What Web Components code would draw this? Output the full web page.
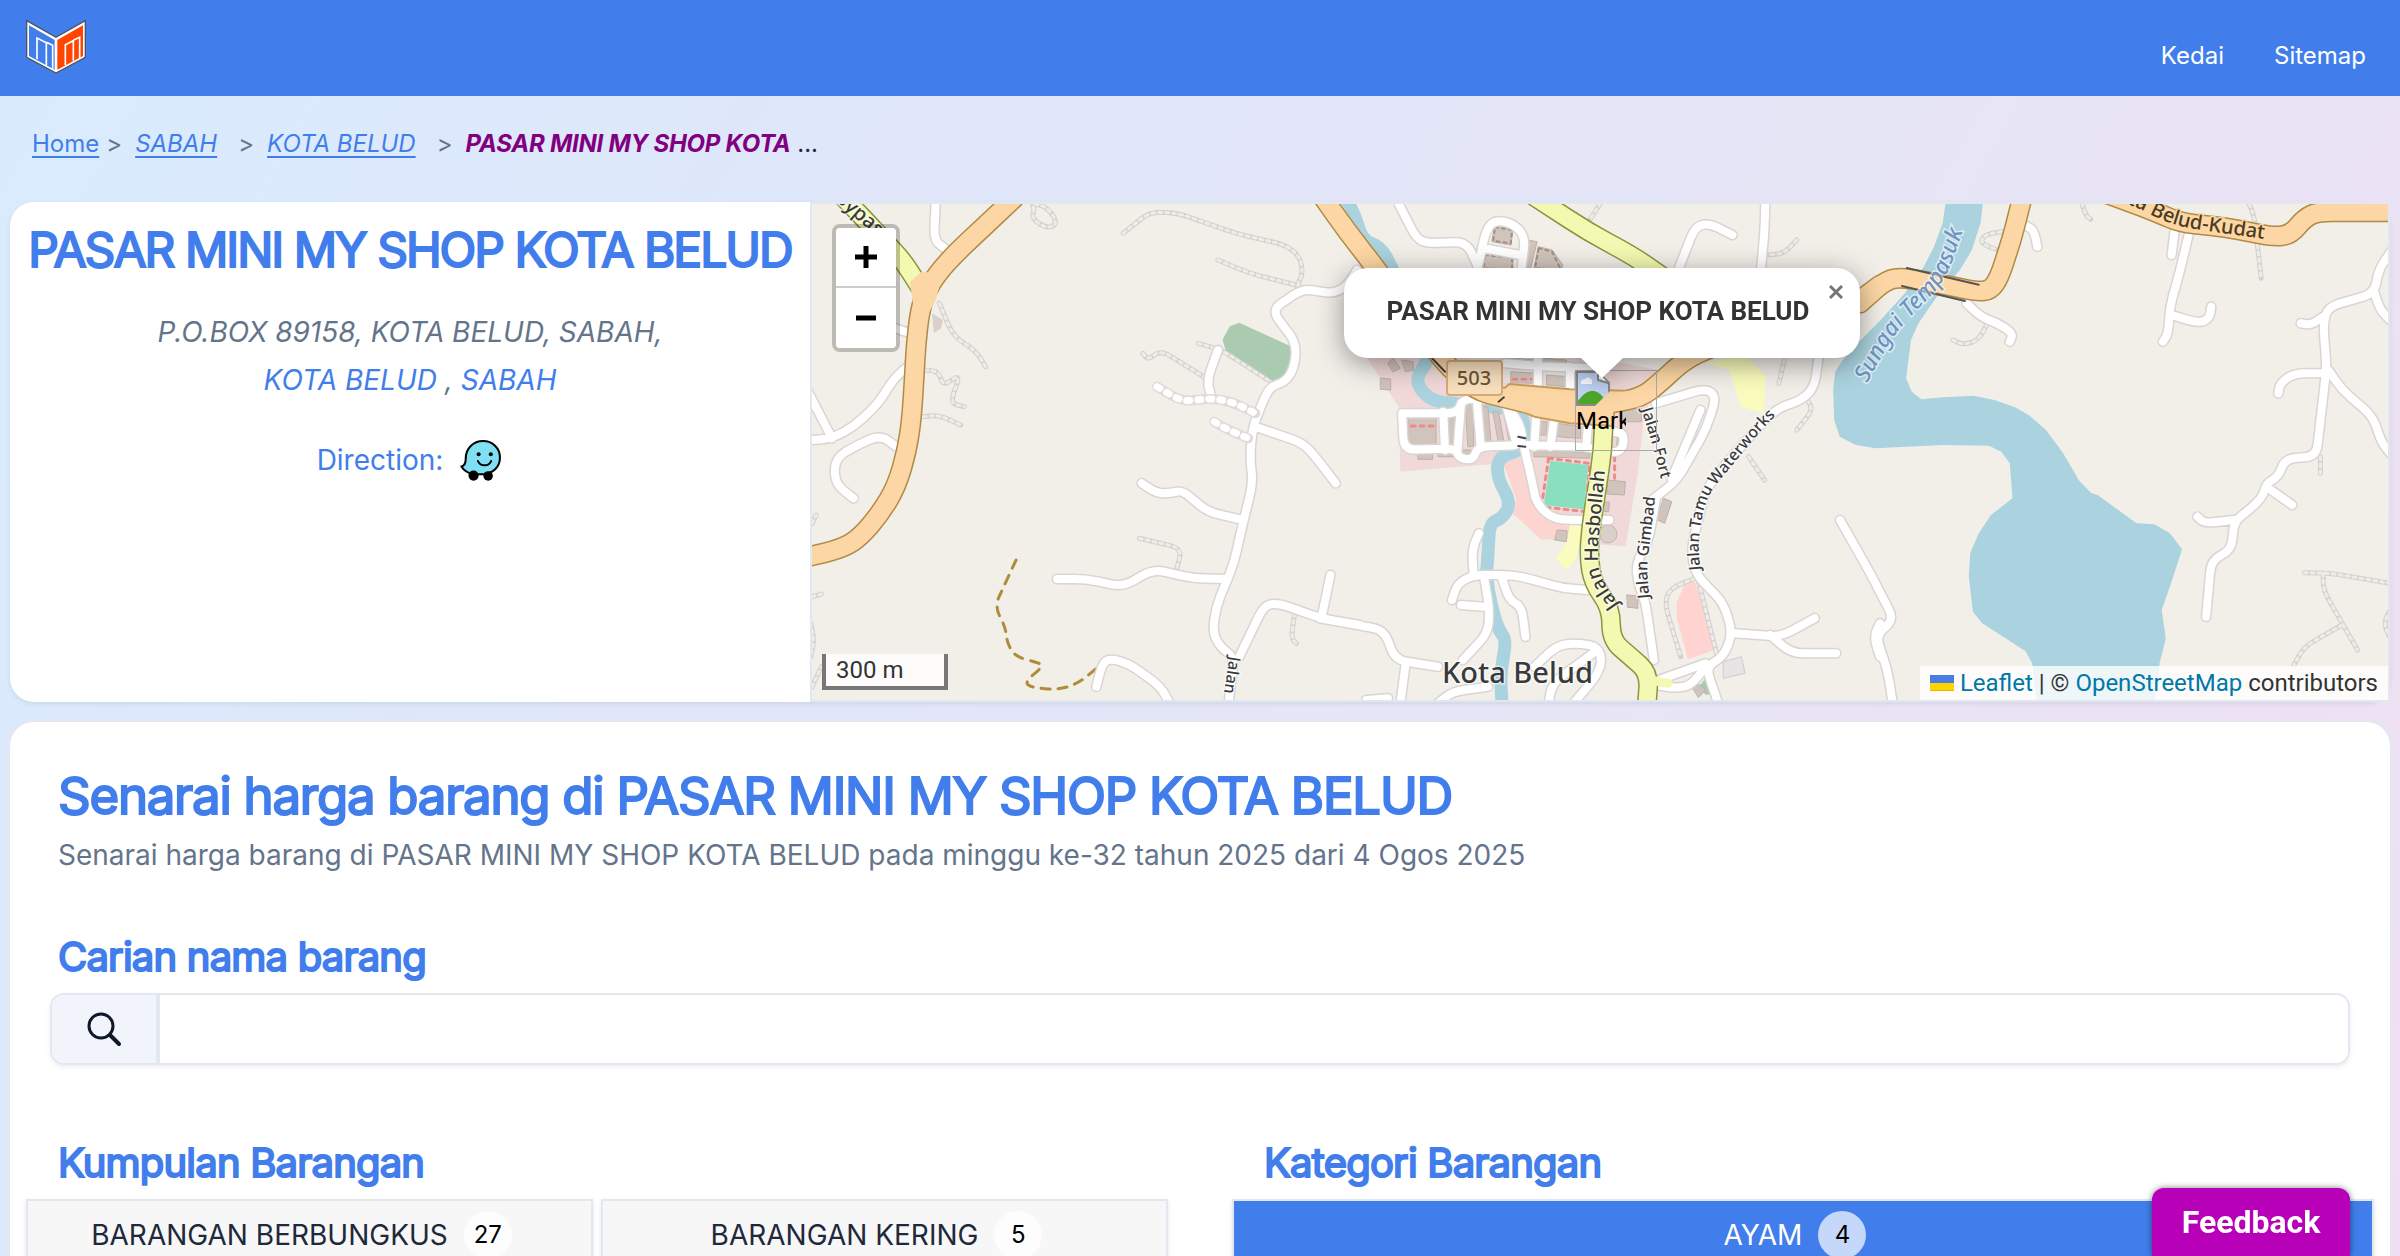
<!DOCTYPE html>
<html lang="ms">
<head>
<meta charset="utf-8">
<meta name="viewport" content="width=device-width, initial-scale=1">
<title>PASAR MINI MY SHOP KOTA BELUD</title>
<style>
  html { scrollbar-width: none; }
  body {
    margin: 0;
    min-height: 100vh;
    font-family: Inter, "Liberation Sans", sans-serif;
    color: #1e293b;
    background: linear-gradient(120deg, #d8ecfe 0%, #dfe7fa 28%, #e7e5f6 65%, #f0dff2 100%);
    --brand: #417eec;
    --muted: #64748b;
    --line: #e2e8f0;
  }
  main { display: flex; flex-direction: column; gap: 20px; padding: 0 10px 20px; }
</style>
</head>
<body>
<site-header></site-header>
<bread-crumbs></bread-crumbs>
<main>
  <shop-card>
    <shop-info slot="info"></shop-info>
    <shop-map slot="map" name="PASAR MINI MY SHOP KOTA BELUD"></shop-map>
  </shop-card>
  <price-list>
    <search-field label="Carian nama barang"></search-field>
    <choice-group slot="groups" heading="Kumpulan Barangan">
      <choice-button count="27">BARANGAN BERBUNGKUS</choice-button>
      <choice-button count="5">BARANGAN KERING</choice-button>
    </choice-group>
    <choice-group slot="groups" heading="Kategori Barangan">
      <choice-button count="4" active>AYAM</choice-button>
    </choice-group>
  </price-list>
</main>
<feedback-button>Feedback</feedback-button>

<script>
class Part extends HTMLElement {
  connectedCallback() {
    if (this.shadowRoot) return;
    this.attachShadow({ mode: "open" }).innerHTML = this.render();
  }
}

customElements.define("site-header", class extends Part {
  render() { return `
    <style>
      :host { display: block; background: var(--brand); }
      header { display: flex; align-items: center; justify-content: space-between; height: 96px; padding: 0 34px 0 24px; }
      .logo { display: block; }
      svg { display: block; width: 64px; height: 56px; }
      nav { display: flex; gap: 50px; padding-top: 16px; }
      nav a { color: #fff; font-size: 24px; line-height: 32px; text-decoration: none; }
    </style>
    <header>
      <a class="logo" href="#" aria-label="Home">
        <svg viewBox="42 30 192 168">
          <path d="M50 32 138 82 226 32V142L138 189 50 142Z" fill="#fff" stroke="#4b5563" stroke-width="4"/>
          <path d="M57 46 134 90V179L57 138Z" fill="#417eec"/>
          <path d="M219 46 142 90V179L219 138Z" fill="#ff4500"/>
          <path d="M81 148V84L109 98V166M109 97 128 106V176" fill="none" stroke="#fff" stroke-width="5"/>
          <path d="M166 165V104L190 92V152M190 91 209 82V144" fill="none" stroke="#fff" stroke-width="5"/>
        </svg>
      </a>
      <nav><a href="#kedai">Kedai</a><a href="#sitemap">Sitemap</a></nav>
    </header>`; }
});

customElements.define("bread-crumbs", class extends Part {
  render() { return `
    <style>
      :host { display: block; padding: 28px 32px 26px; }
      ol { display: flex; align-items: flex-start; height: 52px; margin: 0; padding: 0; list-style: none; font-size: 24px; line-height: 40px; }
      a { color: var(--brand); text-underline-offset: 4px; }
      .region { font-style: italic; }
      li + li::before { content: ">"; color: var(--muted); margin: 0 13px 0 7px; }
      li.far + li::before { margin-left: 21px; }
      .here { color: #800080; font-weight: 700; font-style: italic; letter-spacing: -0.01em; }
    </style>
    <nav aria-label="Breadcrumb"><ol>
      <li><a href="#">Home</a></li>
      <li class="far"><a class="region" href="#sabah">SABAH</a></li>
      <li class="far"><a class="region" href="#kota-belud">KOTA BELUD</a></li>
      <li><span class="here">PASAR MINI MY SHOP KOTA</span> ...</li>
    </ol></nav>`; }
});

customElements.define("shop-card", class extends Part {
  render() { return `
    <style>
      :host { display: grid; grid-template-columns: minmax(0, 800fr) minmax(0, 1580fr); min-height: 500px; box-sizing: border-box;
        border-radius: 24px; background: #fff; box-shadow: 0 2px 4px rgba(100,116,139,.15); }
    </style>
    <slot name="info"></slot><slot name="map"></slot>`; }
});

customElements.define("shop-info", class extends Part {
  render() { return `
    <style>
      :host { display: flex; flex-direction: column; align-items: center; gap: 28px; padding-top: 18px; text-align: center; }
      h1 { margin: 0; color: var(--brand); font-size: 48px; line-height: 60px; font-weight: 400; -webkit-text-stroke: 2px var(--brand); letter-spacing: -2px; white-space: nowrap; }
      address { color: var(--muted); font-size: 28px; line-height: 48px; }
      a { color: var(--brand); text-decoration: none; }
      .go { display: flex; align-items: center; gap: 16px; font-size: 28px; line-height: 56px; color: var(--brand); }
      svg { display: block; width: 44px; height: 44px; }
    </style>
    <h1>PASAR MINI MY SHOP KOTA BELUD</h1>
    <address>P.O.BOX 89158, KOTA BELUD, SABAH,<br><a href="#kota-belud">KOTA BELUD</a> , <a href="#sabah">SABAH</a></address>
    <a class="go" href="#waze">Direction:
      <svg viewBox="62 54 130 130" aria-hidden="true">
        <path d="M133 63C161 63 183 84 183 112 183 139 163 158 135 161H104C87 157 76 149 69 138 79 137 82 130 82 114 82 85 104 63 133 63Z" fill="#7fe0f3" stroke="#000" stroke-width="6" stroke-linejoin="round"/>
        <circle cx="105" cy="165" r="15"/><circle cx="148" cy="166" r="14"/>
        <circle cx="120" cy="102" r="6"/><circle cx="156" cy="102" r="6"/>
        <path d="M118 122C124 139 151 139 157 122" fill="none" stroke="#000" stroke-width="6" stroke-linecap="round"/>
      </svg>
    </a>`; }
});

/* Each sheet holds its own survey grid: origin and scale on the map plane. */
const sheets = {
  west: { x: 800, y: 190, sx: 2.8, sy: 3 },
  town: { x: 1320, y: 190, sx: 2.8, sy: 3 },
  east: { x: 1860, y: 190, sx: 2.904, sy: 3 }
};
function points(sheet, text) {
  const s = sheets[sheet];
  return text.trim().split(/\s+/).map(p => {
    const [x, y] = p.split(",").map(Number);
    return [s.x + x / s.sx, s.y + y / s.sy];
  });
}
const fmt = p => p[0].toFixed(1) + " " + p[1].toFixed(1);
function polygon(sheet, text) { return "M" + points(sheet, text).map(fmt).join("L") + "Z"; }
/* A line with its corners rounded off. */
function line(sheet, text, round = 12) {
  const p = points(sheet, text);
  let d = "M" + fmt(p[0]);
  for (let i = 1; i < p.length - 1; i++) {
    const [a, b, c] = [p[i - 1], p[i], p[i + 1]];
    const la = Math.hypot(b[0] - a[0], b[1] - a[1]) || 1, lc = Math.hypot(c[0] - b[0], c[1] - b[1]) || 1;
    const ra = Math.min(round, la / 2) / la, rc = Math.min(round, lc / 2) / lc;
    d += "L" + fmt([b[0] + (a[0] - b[0]) * ra, b[1] + (a[1] - b[1]) * ra]);
    d += "Q" + fmt(b) + " " + fmt([b[0] + (c[0] - b[0]) * rc, b[1] + (c[1] - b[1]) * rc]);
  }
  return d + "L" + fmt(p[p.length - 1]);
}
const many = (sheet, text, round) => text.trim().split("\n").map(t => line(sheet, t, round)).join("");
const shapes = (sheet, text) => text.trim().split("\n").map(t => polygon(sheet, t)).join("");

const streets = many("west", `
380,30 375,150 405,175
34,750 90,745 150,710 220,640 260,570 295,535
20,600 90,745
270,770 225,735 160,765 98,805 97,880 150,925
265,415 305,428
1560,240 1530,290 1490,312 1410,295 1320,360 1390,460 1385,530 1360,575 1315,590 1290,650 1268,710 1260,800 1268,880 1240,1000 1215,1120 1165,1250 1155,1330 1180,1375 1215,1400 1200,1540
1170,480 1140,570 1150,615
1275,710 1410,760 1450,810 1500,880
957,880 1000,910 1040,910 1070,900 1140,965 1240,990
720,1167 800,1167 905,1190 990,1137 1100,1165 1190,1167
1230,1400 1300,1245 1340,1240 1460,1285 1568,1305
1460,1285 1485,1155
830,1490 845,1425 865,1405 920,1420 1010,1490 1035,1540`) + many("town", `
215,30 270,145 300,160 410,155 440,225
440,240 465,120 490,90 540,100 575,140 565,230
460,175 560,195
1005,235 1050,110 1090,100 1155,135
1247,30 1245,120 1235,235
1400,470 1385,590 1350,630 1280,655 1220,720 1130,830 1080,900 1060,980 1040,1080 1050,1150 1130,1240 1155,1330 1130,1400 1080,1430 1115,1540
230,670 385,670 400,625 510,630 560,700 570,765 440,770 430,810 390,805 380,775 235,780 230,670
345,665 350,780
395,640 385,780
440,640 450,770
520,640 550,760
570,765 595,880 605,940 650,985 700,990 810,990
575,765 740,770 830,790 850,770 850,730 820,725
605,680 600,770
655,690 645,770
750,710 745,770
610,500 610,590
700,530 700,595
520,520 640,530 760,535
940,640 1080,595 1110,620 1080,720 1000,870 930,930
1065,660 985,865
940,930 920,1050 885,1120 890,1180 910,1230 920,1300 935,1410
1160,1330 1290,1340 1385,1285
1260,1335 1320,1390 1445,1390
370,1230 385,1180 430,1155 540,1155 600,1170 680,1195 750,1200
430,1150 425,1080 445,1030
460,1165 475,1260 470,1330 400,1410
395,1245 460,1250
510,1165 530,1230 565,1250 575,1340
0,1285 180,1320 210,1410 330,1430
240,1420 225,1540
600,1430 660,1370 700,1360 770,1365 790,1400 780,1450 710,1540
640,1540 650,1480 770,1385
330,1540 370,1505 470,1490
130,1530 190,1525
935,1475 1080,1420
940,1485 1000,1495 1040,1485 1080,1430
1568,1300 1550,1340 1568,1400`) + many("east", `
478,105 505,120 515,170
310,340 350,380 400,400 445,430 435,455
960,110 930,240 900,350 895,430 880,455
905,375 985,400 1015,385 1020,350
915,110 905,195
1545,180 1505,240 1495,310 1360,350 1345,400 1355,530 1345,620 1325,800 1235,805 1215,860 1180,880 1170,920 1130,960 1085,995 1080,1080 1020,1110 1005,1280
1495,310 1510,360 1545,395
1280,400 1310,405 1345,380
1215,610 1220,580 1260,550 1350,550
1360,540 1400,600 1490,680 1515,760 1545,795
1180,890 1255,945
980,980 1000,1000 1085,990
-58,990 30,1150 100,1290 45,1335 80,1440 95,1540`);

const tracks = many("west", `
905,130 980,65 1060,70 1220,130 1360,165 1400,200 1408,250 1395,280
1170,210 1260,250 1400,288
655,60 650,40 690,50 718,90 710,112 680,110 650,85 655,60
390,340 430,440 490,480 520,530
350,540 390,545 400,590 450,550 420,640 460,650
345,680 390,675 450,705
1115,460 1180,480 1310,570
960,490 975,510 1010,480 1130,560
950,1045 1070,1075 1055,1135
1385,1270 1375,1345 1390,1360
34,1000 45,975
34,1220 60,1212
30,1300 40,1350 30,1400
34,1490 60,1430`) + many("town", `
1050,1165 980,1195 965,1240 1010,1400
1060,1175 1110,1390
785,40 755,90
1335,150 1300,190 1255,195
1300,510 1285,580
1365,630 1380,660 1335,720
1200,800 1245,870`) + many("east", `
645,40 655,75 670,88
410,125 360,135 350,160 400,180
1130,42 1145,80 1165,265
1290,1148 1370,1150 1540,1180
1345,1150 1345,1200 1445,1380
1400,1305 1290,1370 1260,1425
1540,1260 1520,1300 1540,1345
370,400 345,450 300,465 270,450
1337,800 1337,850`);

const trunk = many("west", `
600,24 530,95 440,185 385,250 350,310 335,370 325,460 320,560 313,680 300,780 270,890 225,970 170,1040 120,1075 20,1101`, 30) + many("town", `
10,24 80,130 150,225 340,510 430,600 520,625 620,650 720,650 820,640 900,622 950,580 1020,510 1100,470 1500,340 1568,285`, 30) + many("east", `
0,340 70,275 110,262 200,275 340,305 380,300 405,260 440,150 472,20
700,5 850,62 930,98 1060,112 1200,140 1250,135 1290,85 1330,65 1550,65`, 14);
const secondary = many("west", `
120,20 200,110 290,215 335,290`) + many("town", `
600,20 750,125 880,200 960,260
795,660 792,780 775,900 760,1000 752,1100 765,1180 815,1255 815,1350 870,1400 922,1450 915,1545`, 24);
const creek = many("town", `
70,20 100,80 118,150 170,170 200,230 310,500 270,560 280,600 320,635 380,640 560,660 575,720 565,780 500,800 495,860 535,940 510,985 475,1000 470,1100 465,1160 480,1250 500,1320 522,1350 505,1450 510,1545`, 14);
const lake = polygon("east", `250,30 240,100 215,170 185,230 130,310 60,390 -12,465 -50,510 -72,545 -78,600 -75,690 -59,740 -12,765 45,775 240,765 375,767 410,785 435,820 443,925 380,975 345,1030 320,1090 316,1160 328,1265 355,1300 480,1383 500,1420 515,1545 855,1545 870,1420 888,1345 876,1260 905,1175 935,1078 900,1030 855,1003 803,1000 690,915 670,908 635,870 590,790 540,720 490,675 450,652 390,630 330,617 240,622 178,628 150,605 134,565 148,450 170,400 230,310 290,240 325,180 350,100 358,30`);
const homes = shapes("town", `
490,108 540,118 535,165 482,155
462,190 540,200 540,240 455,235
582,150 608,155 590,235 570,235
612,170 650,180 680,225 675,240 600,235
248,680 325,680 325,770 248,770
362,685 378,685 378,765 362,765
408,640 430,640 430,770 415,770
450,650 470,650 480,765 460,765
485,665 500,665 515,755 500,755
515,670 530,670 545,750 530,750
612,695 635,695 635,735 612,735
665,700 730,710 730,745 665,740
275,790 315,790 315,808 275,808
332,785 375,785 375,800 332,800
395,780 430,780 430,795 395,795
600,775 755,790 755,805 600,800
805,870 855,875 852,915 805,912
785,935 810,937 808,965 785,962
665,1020 692,1022 690,1055 658,1050
860,1215 890,1218 890,1255 862,1252
962,925 985,935 965,1000 945,990
835,735 852,735 850,765 832,765
840,655 900,655 900,695 840,695
170,565 198,567 198,600 170,598
190,520 205,505 225,535 205,545
230,510 260,515 262,540 240,545
535,545 610,550 610,580 535,578
635,555 695,560 695,590 635,585
540,505 600,510 600,525 540,522
625,505 690,510 690,528 625,525
1045,1495 1060,1482 1080,1500 1060,1522`);

customElements.define("shop-map", class extends Part {
  render() {
    const name = this.getAttribute("name");
    return `
    <style>
      :host { display: block; position: relative; margin: 2px; background: #f2efe9; box-shadow: 0 0 0 2px var(--line);
        font-family: Roboto, "Liberation Sans", sans-serif; font-size: 24px; color: #333; }
      .plane { position: absolute; inset: 0; width: 100%; height: 100%; }
      .plane path { fill: none; stroke-linecap: round; stroke-linejoin: round; }
      .plane text { font-family: "Noto Sans", sans-serif; font-weight: 500; fill: #3a3a3a; paint-order: stroke; stroke: rgba(255,255,255,.6); stroke-width: 3; }
      .zoom { position: absolute; left: 20px; top: 20px; display: flex; flex-direction: column; border: 4px solid rgba(0,0,0,.22); border-radius: 8px; background-clip: padding-box; }
      .zoom button { width: 60px; height: 60px; padding: 0; border: 0; background: #fff; color: #000; display: grid; place-items: center; }
      .zoom button:first-child { border-radius: 4px 4px 0 0; border-bottom: 2px solid #ccc; }
      .zoom button:last-child { border-radius: 0 0 4px 4px; }
      .zoom svg { width: 24px; height: 24px; }
      .scale { position: absolute; left: 10px; bottom: 10px; box-sizing: border-box; width: 126px; padding: 0 10px; border: 4px solid #777; border-top: 0; background: rgba(255,255,255,.8); line-height: 32px; }
      .credit { position: absolute; right: 0; bottom: 0; display: flex; align-items: center; gap: 6px; padding: 0 10px; background: rgba(255,255,255,.8); line-height: 34px; white-space: nowrap; }
      .credit a { color: #0078a8; text-decoration: none; }
      .credit svg { width: 24px; height: 16px; }
      .pin { position: absolute; left: 763px; top: 166px; width: 80px; height: 79px; border: 1px solid #aaa; color: #000; line-height: 28px; }
      .pin svg { display: block; width: 34px; height: 36px; }
      .pin span { display: block; width: 50px; overflow: hidden; }
      .popup { position: absolute; left: 532px; top: 64px; filter: drop-shadow(0 6px 14px rgba(0,0,0,.4)); }
      .bubble { display: flex; align-items: center; justify-content: center; width: 516px; height: 90px; padding: 0 8px 4px 0; box-sizing: border-box; border-radius: 24px; background: #fff; }
      .bubble b { font-size: 26px; line-height: 34px; font-weight: 700; }
      .tip { display: block; margin: 0 auto; width: 42px; height: 20px; background: #fff; clip-path: polygon(0 0, 100% 0, 50% 100%); }
      .popup button { position: absolute; right: 8px; top: 8px; width: 32px; height: 32px; padding: 0; border: 0; background: none; display: grid; place-items: center; }
      .popup button svg { width: 14px; height: 14px; }
    </style>
    <svg class="plane" viewBox="812 204 1576 496" preserveAspectRatio="xMidYMid slice" role="img" aria-label="Peta Kota Belud">
      <defs>
        <path id="gimbad" d="${line("town", "922,1225 915,1130 938,930 945,860")}"/>
        <path id="fort" d="${line("town", "900,658 930,760 955,870 990,1000")}"/>
        <path id="tamu" d="${line("town", "1065,1140 1058,1050 1082,920 1135,850 1240,715 1300,650", 20)}"/>
        <path id="hasb" d="${line("town", "838,1245 790,1170 775,1110 790,930 803,780", 24)}"/>
        <path id="tempasuk" d="${line("east", "20,580 100,430 250,270 325,40", 24)}"/>
        <path id="kudat" d="${line("east", "705,24 790,45 880,92 940,112 1070,132 1320,168", 14)}"/>
        <path id="bypass" d="${line("west", "94,28 210,135 300,240")}"/>
        <path id="jalan" d="${line("west", "1203,1398 1180,1560")}"/>
      </defs>
      <path d="${shapes("town", "130,500 220,650 225,845 450,825 520,820 560,960 650,1050 855,1070 890,850 905,700 950,540 720,495")}" style="fill:#f0d9d8"/>
      <path d="${shapes("town", "515,825 600,790 610,930 640,985 700,1000 690,1040 620,1050 560,990 525,960 550,930")}" style="fill:#fcd5d1"/>
      <path d="${shapes("town", "1048,1170 1112,1378 1030,1408 1000,1290 998,1240 1020,1185")}" style="fill:#ffd4d0"/>
      <path d="${shapes("town", "1080,520 1180,490 1250,560 1240,670 1180,650 1145,540\n700,1005 740,1000 715,1110 690,1140 660,1105 690,1060")}" style="fill:#fafcbd"/>
      <path d="${shapes("town", "400,495 720,505 760,600 520,580")}" style="fill:#ebe4e2"/>
      <path d="${creek}" stroke="#aad3df" stroke-width="13"/>
      <path d="${lake}" style="fill:#aad3df"/>
      <path d="${polygon("west", "1230,402 1380,475 1375,540 1355,565 1325,570 1200,500 1186,450 1205,412")}" style="fill:#aacbaf" stroke="#aacbaf" stroke-width="2"/>
      <path d="${polygon("town", "1080,1465 1105,1510 1080,1515 1060,1490")}" style="fill:#aacbaf"/>
      <path d="${polygon("town", "1130,1415 1180,1400 1190,1450 1130,1465")}" style="fill:#e6e4e4" stroke="#ccc"/>
      <path d="${polygon("west", "370,370 400,390 395,415 375,430")}" style="fill:#d9d0c9"/>
      <path d="${homes}" style="fill:#d1c4bd" stroke="#bfb0a8"/>
      <circle cx="1608" cy="534" r="9" fill="#d9d0c9" stroke="#c3b5ae"/>
      <path d="${shapes("town", "490,112 538,120 534,160 485,152\n462,195 538,203 538,240 458,235\n612,175 650,185 675,240 602,235")}" stroke="#a58f84" stroke-width="2" stroke-dasharray="3 4"/>
      <path d="${polygon("town", "640,805 755,820 745,965 620,950")}" stroke="#f08a8a" stroke-width="3" stroke-dasharray="4 5"/>
      <path d="${polygon("town", "645,812 750,825 740,958 627,945")}" style="fill:#88e0be"/>
      <path d="${many("town", "825,800 825,865\n255,708 325,708\n540,568 605,568")}" stroke="#f08a8a" stroke-width="3" stroke-dasharray="4 5"/>
      <path d="${tracks}" stroke="#d3d1d0" stroke-width="5"/>
      <path d="${tracks}" stroke="#efece8" stroke-width="3" stroke-dasharray="3 4"/>
      <path d="${line("west", "605,1110 570,1190 545,1250 575,1310 580,1360 605,1402 670,1418 680,1430 630,1475 645,1492 720,1500 780,1480 830,1435")}" stroke="#b08b3c" stroke-width="3" stroke-dasharray="9 8"/>
      <path d="${streets}" stroke="#d8d5d4" stroke-width="11"/>
      <path d="${streets}" stroke="#fff" stroke-width="8"/>
      <path d="${many("west", "1000,590 1070,635 1150,625 1210,635 1275,670\n1160,695 1190,715 1255,745")}" stroke="#dedbd9" stroke-width="10"/>
      <path d="${many("west", "1000,590 1070,635 1150,625 1210,635 1275,670\n1160,695 1190,715 1255,745")}" stroke="#fff" stroke-width="7" stroke-dasharray="3 8"/>
      <path d="${secondary}" stroke="#8b9440" stroke-width="20"/>
      <path d="${secondary}" stroke="#f3f9b0" stroke-width="17"/>
      <path d="${line("town", "925,1470 975,1480")}" stroke="#f3f9b0" stroke-width="9"/>
      <path d="${trunk}" stroke="#b18b45" stroke-width="21"/>
      <path d="${polygon("west", "308,275 340,245 400,250 380,330 345,400 318,400 316,340")}" style="fill:#fcd6a4"/>
      <path d="${polygon("town", "505,605 530,582 700,598 860,602 860,642 825,655 820,708 700,700 600,680 545,655")}" style="fill:#fcd6a4" stroke="#c99d5b" stroke-width="2"/>
      <path d="${trunk}" stroke="#fcd6a4" stroke-width="18"/>
      <path d="${many("east", "136,234 345,284\n122,288 305,333")}" stroke="#555" stroke-width="2"/>
      <path d="${many("town", "310,500 350,545\n500,635 515,622\n555,740 575,745\n555,768 575,770")}" stroke="#444" stroke-width="2"/>
      <rect x="1447" y="361" width="55" height="34" rx="3" fill="#f8dfbd" stroke="#d5ac76" stroke-width="2"/>
      <text x="1474" y="385" text-anchor="middle" font-size="20" style="stroke:none;fill:#6b5435">503</text>
      <text x="1442" y="683" font-size="29">Kota Belud</text>
      <text font-size="16"><textPath href="#gimbad">Jalan Gimbad</textPath></text>
      <text font-size="16"><textPath href="#fort">Jalan Fort</textPath></text>
      <text font-size="16"><textPath href="#tamu">Jalan Tamu Waterworks</textPath></text>
      <text font-size="19"><textPath href="#hasb">Jalan Hasbollah</textPath></text>
      <text font-size="16"><textPath href="#jalan">Jalan</textPath></text>
      <text font-size="20"><textPath href="#bypass">Bypass</textPath></text>
      <text font-size="20" style="stroke:#fcd6a4;fill:#4a3a20"><textPath href="#kudat">Kota Belud-Kudat</textPath></text>
      <text font-size="23" style="fill:#6f94c4;font-style:italic"><textPath href="#tempasuk">Sungai Tempasuk</textPath></text>
    </svg>
    <div class="zoom">
      <button aria-label="Zoom in"><svg viewBox="0 0 24 24"><path d="M12 1V23M1 12H23" stroke="#000" stroke-width="5"/></svg></button>
      <button aria-label="Zoom out"><svg viewBox="0 0 24 24"><path d="M2 12H22" stroke="#000" stroke-width="5"/></svg></button>
    </div>
    <div class="scale">300 m</div>
    <div class="pin">
      <svg viewBox="0 0 34 36" aria-hidden="true">
        <path d="M1 1H22L33 12V34H1Z" fill="#c3d6f8" stroke="#8b8b8b" stroke-width="2"/>
        <path d="M5 13a4 4 0 0 1 4-5 4 4 0 0 1 7 3v2Z" fill="#fff"/>
        <path d="M2 33V30C8 22 12 20 17 20S28 25 30 33Z" fill="#4ea82b"/>
        <path d="M19 35 34 20V35Z" fill="#fcd6a4"/>
        <path d="M22 1V9L32 12" fill="#fff" stroke="#8b8b8b" stroke-width="2"/>
      </svg>
      <span>Mark</span>
    </div>
    <div class="popup">
      <div class="bubble"><b>${name}</b></div>
      <i class="tip"></i>
      <button aria-label="Close popup"><svg viewBox="0 0 14 14"><path d="M1 1 13 13M13 1 1 13" stroke="#757575" stroke-width="3"/></svg></button>
    </div>
    <div class="credit">
      <svg viewBox="0 0 24 16" aria-hidden="true"><path fill="#4c7be1" d="M0 0h24v8H0z"/><path fill="#ffd500" d="M0 8h24v7H0z"/><path fill="#e0bc00" d="M0 15h24v1H0z"/></svg>
      <span><a href="#leaflet">Leaflet</a> | © <a href="#osm">OpenStreetMap</a> contributors</span>
    </div>`;
  }
});

customElements.define("price-list", class extends Part {
  render() { return `
    <style>
      :host { display: block; padding: 44px 16px 40px; border-radius: 24px; background: #fff; box-shadow: 0 0 0 2px var(--line); }
      header { padding: 0 32px; }
      h2 { margin: 0; color: var(--brand); font-size: 51px; line-height: 60px; font-weight: 400; -webkit-text-stroke: 2px var(--brand); letter-spacing: -0.025em; }
      p { margin: 6px 0 0; color: var(--muted); font-size: 28px; line-height: 46px; }
      .columns { display: grid; grid-template-columns: repeat(2, minmax(0, 1fr)); gap: 64px; margin-top: 74px; }
    </style>
    <header>
      <h2>Senarai harga barang di PASAR MINI MY SHOP KOTA BELUD</h2>
      <p>Senarai harga barang di PASAR MINI MY SHOP KOTA BELUD pada minggu ke-32 tahun 2025 dari 4 Ogos 2025</p>
    </header>
    <slot></slot>
    <div class="columns"><slot name="groups"></slot></div>`; }
});

customElements.define("search-field", class extends Part {
  render() { return `
    <style>
      :host { display: block; margin-top: 55px; padding: 0 24px; }
      label { display: block; padding: 0 8px; color: var(--brand); font-size: 40px; line-height: 48px; font-weight: 400; -webkit-text-stroke: 2px var(--brand); letter-spacing: -0.02em; }
      .field { display: flex; height: 72px; box-sizing: border-box; margin-top: 12px; border: 2px solid var(--line); border-radius: 14px; overflow: hidden; box-shadow: 0 2px 4px rgba(100,116,139,.12); }
      button { display: grid; place-items: center; width: 108px; padding: 0; border: 0; border-right: 4px solid var(--line); background: #f1f5fb; }
      svg { width: 36px; height: 36px; }
      input { flex: 1; min-width: 0; border: 0; padding: 0 20px; font: 28px Inter, sans-serif; background: #fff; outline: 0; }
    </style>
    <label for="q">${this.getAttribute("label")}</label>
    <div class="field">
      <button aria-label="Cari"><svg viewBox="0 0 36 36"><circle cx="15" cy="15" r="12" fill="none" stroke="#0f172a" stroke-width="3"/><path d="M24 24 33 33" stroke="#0f172a" stroke-width="4" stroke-linecap="round"/></svg></button>
      <input id="q" type="text">
    </div>`; }
});

customElements.define("choice-group", class extends Part {
  render() { return `
    <style>
      :host { display: block; }
      h3 { margin: 0 32px 12px; color: var(--brand); font-size: 40px; line-height: 48px; font-weight: 400; -webkit-text-stroke: 2px var(--brand); letter-spacing: -0.02em; }
      div { display: grid; grid-template-columns: repeat(auto-fit, minmax(480px, 1fr)); gap: 8px; }
    </style>
    <h3>${this.getAttribute("heading")}</h3>
    <div><slot></slot></div>`; }
});

customElements.define("choice-button", class extends Part {
  render() { return `
    <style>
      :host { display: block; }
      button { display: flex; align-items: center; justify-content: center; width: 100%; height: 72px; padding: 0; border: 2px solid var(--line);
        background: #f7f7f7; color: #1e293b; font: 28px/48px Inter, "Liberation Sans", sans-serif; box-shadow: 0 2px 4px rgba(100,116,139,.2); }
      span { width: 48px; height: 48px; margin: 0 16px; border-radius: 24px; background: #fdfdfd; color: #000; font-size: 24px; text-align: center; }
      :host([active]) button { background: var(--brand); color: #fff; }
      :host([active]) span { background: #c6d8f9; }
    </style>
    <button><slot></slot><span>${this.getAttribute("count")}</span></button>`; }
});

customElements.define("feedback-button", class extends Part {
  render() { return `
    <style>
      :host { position: fixed; right: 50px; bottom: 0; }
      button { display: block; width: 198px; height: 68px; padding: 0; border: 0; border-radius: 12px 12px 0 0; background: #b800b8; color: #fff;
        font: 700 32px/66px Roboto, "Liberation Sans", sans-serif; box-shadow: 0 0 6px rgba(0,0,0,.5); }
    </style>
    <button><slot></slot></button>`; }
});
</script>
</body>
</html>
